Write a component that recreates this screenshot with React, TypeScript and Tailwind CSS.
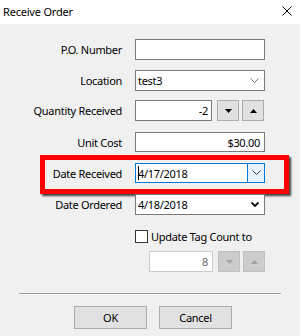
import React from "react";

function Chevron({ className = "" }: { className?: string }) {
  return (
    <svg width="9" height="6" viewBox="0 0 9 6" className={className}>
      <path d="M0.5 0.5 L4.5 4.5 L8.5 0.5" fill="none" stroke="currentColor" strokeWidth="1" />
    </svg>
  );
}

function SpinButton({ dir, disabled }: { dir: "up" | "down"; disabled?: boolean }) {
  return (
    <div
      className={`w-[22px] h-[21px] flex items-center justify-center border ${
        disabled ? "bg-[#cccccc] border-[#bfbfbf]" : "bg-[#e1e1e1] border-[#adadad]"
      }`}
    >
      <svg width="7" height="4" viewBox="0 0 7 4">
        {dir === "down" ? (
          <path d="M0 0 H7 L3.5 4 Z" fill={disabled ? "#a0a0a0" : "#000"} />
        ) : (
          <path d="M0 4 H7 L3.5 0 Z" fill={disabled ? "#a0a0a0" : "#000"} />
        )}
      </svg>
    </div>
  );
}

function Row({
  label,
  mt,
  children,
  extra,
}: {
  label?: string;
  mt: string;
  children: React.ReactNode;
  extra?: React.ReactNode;
}) {
  return (
    <div className={`relative flex items-center ${mt}`}>
      <div className="w-[123px] text-right text-[11px] tracking-[-0.3px] text-[#000] leading-none pr-[1px]">
        {label}
      </div>
      <div className="ml-[12px] flex items-center">{children}</div>
      {extra}
    </div>
  );
}

export default function App() {
  return (
    <div className="w-[300px] h-[336px] bg-[#f0f0f0] font-['Noto_Sans',sans-serif] text-black overflow-hidden">
      {/* Title bar */}
      <div className="h-[24px] bg-white flex items-center justify-between pl-[3px] pr-[8px]">
        <span className="text-[11px] tracking-[-0.2px] leading-none -mt-[2px]">Receive Order</span>
        <svg width="10" height="10" viewBox="0 0 10 10" className="-mt-[2px]">
          <path d="M0.5 0.5 L9.5 9.5 M9.5 0.5 L0.5 9.5" stroke="#000" strokeWidth="1" />
        </svg>
      </div>

      <div className="flex flex-col pt-[15px] text-[11px] tracking-[-0.3px]">
        <Row label="P.O. Number" mt="mt-0">
          <div className="w-[130px] h-[21px] bg-white border border-[#7a7a7a]" />
        </Row>

        <Row label="Location" mt="mt-[10px]">
          <div className="w-[130px] h-[21px] bg-white border border-[#7a7a7a] flex items-center justify-between pl-[2px] pr-[5px]">
            <span className="leading-none">test3</span>
            <Chevron className="text-[#7a7a7a]" />
          </div>
        </Row>

        <Row label="Quantity Received" mt="mt-[9px]">
          <div className="w-[77px] h-[21px] bg-white border border-[#7a7a7a] flex items-center justify-end pr-[3px]">
            <span className="leading-none">-2</span>
          </div>
          <div className="ml-[5px]">
            <SpinButton dir="down" />
          </div>
          <div className="ml-[3px]">
            <SpinButton dir="up" />
          </div>
        </Row>

        <Row label="Unit Cost" mt="mt-[11px]">
          <div className="w-[130px] h-[20px] bg-white border border-[#7a7a7a] flex items-center justify-end pr-[4px]">
            <span className="leading-none">$30.00</span>
          </div>
        </Row>

        <Row
          label="Date Received"
          mt="mt-[11px]"
          extra={
            <div className="absolute left-[40px] top-[-8px] w-[249px] h-[39px] border-[5px] border-[#ff0000] shadow-[2px_2px_2px_rgba(0,0,0,0.75)] pointer-events-none" />
          }
        >
          <div className="w-[130px] h-[20px] bg-white border border-[#0078d7] flex items-stretch">
            <div className="flex-1 flex items-center pl-[2px]">
              <span className="w-px h-[14px] bg-black" />
              <span className="leading-none -ml-[1px]">4/17/2018</span>
            </div>
            <div className="w-[17px] border-l border-[#0078d7] bg-[#e5f1fb] flex items-center justify-center">
              <Chevron className="text-[#333]" />
            </div>
          </div>
        </Row>

        <Row label="Date Ordered" mt="mt-[11px]">
          <div className="w-[130px] h-[21px] bg-white border border-[#7a7a7a] flex items-center justify-between pl-[2px] pr-[5px]">
            <span className="leading-none">4/18/2018</span>
            <svg width="8" height="5" viewBox="0 0 8 5">
              <path d="M0.5 0.5 L4 4 L7.5 0.5" fill="none" stroke="#000" strokeWidth="1.8" />
            </svg>
          </div>
        </Row>

        <Row mt="mt-[15px]">
          <div className="w-[13px] h-[13px] bg-white border border-[#333]" />
          <span className="ml-[3px] leading-none">Update Tag Count to</span>
        </Row>

        <Row mt="mt-[8px]">
          <div className="ml-[14px] w-[64px] h-[21px] bg-white border border-[#cccccc] flex items-center justify-end pr-[4px]">
            <span className="leading-none text-[#6d6d6d]">8</span>
          </div>
          <div className="ml-[5px]">
            <SpinButton dir="down" disabled />
          </div>
          <div className="ml-[3px]">
            <SpinButton dir="up" disabled />
          </div>
        </Row>

        <div className="mt-[21px] mx-[19px] h-[2px] border-t border-[#a0a0a0] border-b border-b-white" />

        <div className="mt-[11px] flex justify-center gap-[12px] pl-[6px]">
          <button className="w-[73px] h-[23px] bg-[#e1e1e1] border border-[#adadad] leading-none">OK</button>
          <button className="w-[73px] h-[23px] bg-[#e1e1e1] border border-[#adadad] leading-none">Cancel</button>
        </div>
      </div>
    </div>
  );
}
